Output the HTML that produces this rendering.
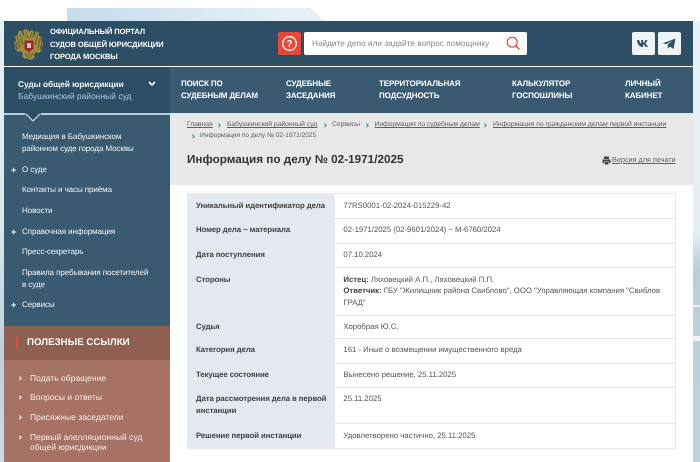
<!DOCTYPE html>
<html lang="ru">
<head>
<meta charset="utf-8">
<title>Информация по делу</title>
<style>
html,body{margin:0;padding:0;width:700px;height:462px;overflow:hidden;background:#fff}
body{position:relative;font-family:"Liberation Sans","DejaVu Sans",sans-serif;font-size:8px;color:#555;text-rendering:geometricPrecision}
.b{position:absolute}
.t{position:absolute;white-space:nowrap;line-height:12px}
a{color:inherit}
.m{color:#fff;font-weight:bold;font-size:8px;letter-spacing:-.12px}
.s{color:#f4f7f9;font-size:8px;letter-spacing:-.08px}
.u{color:#f8ece8;font-size:8.500px;letter-spacing:.03px}
.l{color:#404040;font-weight:bold;font-size:7.800px;letter-spacing:-.09px;left:196px}
.v{color:#555;font-size:7.800px;letter-spacing:-.03px;left:343.400px}
.c{color:#606060;font-size:6.800px;letter-spacing:-.03px}
.a{position:absolute;width:2.400px;height:2.400px;border-top:1.100px solid #2b8a99;border-right:1.100px solid #2b8a99;transform:rotate(45deg)}
.w{position:absolute;left:17.500px;width:2.400px;height:2.400px;border-top:1.100px solid #fff;border-right:1.100px solid #fff;transform:rotate(45deg)}
.p{color:#fff;font-weight:bold;font-size:9px;left:11px}
.r{left:187px;width:488px;height:1px;background:#e4e9ef}
</style>
</head>
<body>
<div class="b" style="left:67px;top:8px;width:258px;height:13px;background:linear-gradient(90deg,#c5dcec,#e0edf6 70%,#e9f1f7);clip-path:polygon(0 0,243px 0,258px 100%,0 100%)"></div>
<div class="b" style="left:0;top:21px;width:4px;height:441px;background:linear-gradient(180deg,#e6eff5 0%,#dbe7ee 45%,#bdd0da 75%,#cbdbe3 100%)"></div>
<div class="b" style="left:693px;top:21px;width:7px;height:441px;background:linear-gradient(180deg,#e9f1f6 0%,#e5eef3 48%,#b9d0da 56%,#bcd2dc 100%)"></div>
<div class="b" style="left:693px;top:305px;width:7px;height:2px;background:#e6eff3"></div>
<div class="b" style="left:693px;top:336px;width:7px;height:5px;background:#eef4f6"></div>

<div class="b" style="left:4px;top:21px;width:689px;height:45px;background:#2c4f65"></div>
<div class="b" style="left:4px;top:67px;width:166px;height:46px;background:#2c4f65"></div>
<div class="b" style="left:170px;top:67px;width:523px;height:46px;background:#3a5a72"></div>

<svg class="b" style="left:13px;top:27px" width="32" height="34" viewBox="0 0 32 34">
<path d="M16 1l-1 3-3-2-2 2 1 4 2 3-3-3-2-5-3 2 0 3-3 1 1 4-2 2 1 4 0 3 3 3 3-1 2 3-1 2 3 3 2-1 2 2 1-1 2 1 3-3-1-2 2-3 3 1 3-3 0-3 1-4-2-2 1-4-3-1 0-3-3-2-2 5-3 3 2-3 1-4-2-2-3 2z" fill="#a08d3a"/>
<path d="M4 8l3 13M7 7l3 11M2 12l3 10M1.500 17l3 6M28 8l-3 13M25 7l-3 11M30 12l-3 10M30.500 17l-3 6M13 5l2 6M19 5l-2 6M12 26l2 4M20 26l-2 4M16 25v6" stroke="#54583f" stroke-width=".9" fill="none"/>
<path d="M11.500 13.500h9v8.500l-4.500 3-4.500-3z" fill="#99272f"/>
<path d="M14 16h4v5h-4z" fill="#c9c2c2"/>
</svg>

<div class="t" style="left:50px;top:26px;color:#fff;font-weight:bold;font-size:7.600px;letter-spacing:-.12px;line-height:12.500px;width:130px">ОФИЦИАЛЬНЫЙ ПОРТАЛ<br>СУДОВ ОБЩЕЙ ЮРИСДИКЦИИ<br>ГОРОДА МОСКВЫ</div>

<div class="b" style="left:278px;top:32px;width:23px;height:23px;background:#e9473a;border-radius:2px"></div>
<svg class="b" style="left:278px;top:32px" width="23" height="23" viewBox="0 0 23 23"><circle cx="11.500" cy="11.500" r="6.800" fill="none" stroke="#fff" stroke-width="1.300"/><text x="11.500" y="15" text-anchor="middle" fill="#fff" font-size="10" font-weight="bold" font-family="Liberation Sans">?</text></svg>
<div class="b" style="left:304px;top:32px;width:223px;height:23px;background:#fff;border-radius:2px"></div>
<div class="t" style="left:312px;top:37.500px;color:#858585;font-size:8.200px;letter-spacing:.03px">Найдите дело или задайте вопрос помощнику</div>
<svg class="b" style="left:505px;top:35px" width="17" height="17" viewBox="0 0 17 17"><circle cx="7.200" cy="7.200" r="5" fill="none" stroke="#e9473a" stroke-width="1.200"/><path d="M11 11l3.500 3.500" stroke="#e9473a" stroke-width="1.300"/></svg>

<div class="b" style="left:632px;top:32px;width:23px;height:23px;background:#eef3f6;border-radius:2px"></div>
<div class="b" style="left:658px;top:32px;width:23px;height:23px;background:#eef3f6;border-radius:2px"></div>
<svg class="b" style="left:632px;top:32px" width="23" height="23" viewBox="0 0 23 23"><path d="M5 8h2.200c.3 2 1.200 3.400 2 3.600V8h2v2.800c.9-.2 1.800-1.300 2.200-2.800h2c-.4 1.800-1.400 3-2.200 3.500.9.5 2 1.500 2.600 3.500h-2.200c-.5-1.400-1.400-2.300-2.400-2.500V15h-.6C7.500 15 5.400 12.300 5 8z" fill="#2c4f65"/></svg>
<svg class="b" style="left:658px;top:32px" width="23" height="23" viewBox="0 0 23 23"><path d="M5 11.300L17.500 6.500l-2 10.500-3.500-2.500-2 2-.5-3.500 5-4.500-6.200 3.800z" fill="#2c4f65"/></svg>

<div class="t" style="left:18px;top:78px;color:#f4f7f9;font-size:8.400px;letter-spacing:-.06px;font-weight:bold">Суды общей юрисдикции</div>
<div class="t" style="left:18px;top:90px;color:#a2c8e6;font-size:8.500px;letter-spacing:-.01px">Бабушкинский районный суд</div>
<svg class="b" style="left:148px;top:81px" width="8" height="6" viewBox="0 0 8 6"><path d="M1 1l3 3 3-3" stroke="#fff" stroke-width="1.600" fill="none"/></svg>

<div class="t m" style="left:181px;top:78px">ПОИСК ПО</div>
<div class="t m" style="left:181px;top:90px">СУДЕБНЫМ ДЕЛАМ</div>
<div class="t m" style="left:286px;top:78px">СУДЕБНЫЕ</div>
<div class="t m" style="left:286px;top:90px">ЗАСЕДАНИЯ</div>
<div class="t m" style="left:379px;top:78px">ТЕРРИТОРИАЛЬНАЯ</div>
<div class="t m" style="left:379px;top:90px">ПОДСУДНОСТЬ</div>
<div class="t m" style="left:512px;top:78px">КАЛЬКУЛЯТОР</div>
<div class="t m" style="left:512px;top:90px">ГОСПОШЛИНЫ</div>
<div class="t m" style="left:625px;top:78px">ЛИЧНЫЙ</div>
<div class="t m" style="left:625px;top:90px">КАБИНЕТ</div>

<div class="b" style="left:4px;top:113px;width:166px;height:213px;background:#3a5a72"></div>
<div class="b" style="left:4px;top:113px;width:166px;height:2px;background:#b4d0e2"></div>
<svg class="b" style="left:25px;top:113px" width="16" height="10" viewBox="0 0 16 10"><path d="M0 0h16v1L8 9 0 1z" fill="#2c4f65"/><path d="M1 1l7 7 7-7" stroke="#b4d0e2" stroke-width="1.300" fill="none"/></svg>

<div class="t s" style="left:22px;top:131px">Медиация в Бабушкинском</div>
<div class="t s" style="left:22px;top:143px">районном суде города Москвы</div>
<div class="t s" style="left:22px;top:164px">О суде</div>
<div class="t s" style="left:22px;top:184px">Контакты и часы приёма</div>
<div class="t s" style="left:22px;top:205px">Новости</div>
<div class="t s" style="left:22px;top:226px">Справочная информация</div>
<div class="t s" style="left:22px;top:246px">Пресс-секретарь</div>
<div class="t s" style="left:22px;top:267px">Правила пребывания посетителей</div>
<div class="t s" style="left:22px;top:279px">в суде</div>
<div class="t s" style="left:22px;top:299px">Сервисы</div>
<div class="t p" style="top:164px">+</div>
<div class="t p" style="top:226px">+</div>
<div class="t p" style="top:299px">+</div>

<div class="b" style="left:4px;top:326px;width:166px;height:34px;background:#8f5f52"></div>
<div class="b" style="left:4px;top:360px;width:166px;height:102px;background:#a67266"></div>
<div class="b" style="left:16px;top:337px;width:2px;height:10px;background:#e9473a"></div>
<div class="t" style="left:27px;top:337px;color:#fff;font-weight:bold;font-size:9.700px;letter-spacing:.02px">ПОЛЕЗНЫЕ ССЫЛКИ</div>
<div class="t u" style="left:30px;top:372px">Подать обращение</div>
<div class="t u" style="left:30px;top:391px">Вопросы и ответы</div>
<div class="t u" style="left:30px;top:411px">Присяжные заседатели</div>
<div class="t u" style="left:30px;top:431px">Первый апелляционный суд</div>
<div class="t u" style="left:30px;top:441px">общей юрисдикции</div>
<div class="w" style="top:376.500px"></div>
<div class="w" style="top:395.500px"></div>
<div class="w" style="top:415.500px"></div>
<div class="w" style="top:435.500px"></div>

<div class="b" style="left:170px;top:113px;width:523px;height:72px;background:#e8e8e8"></div>
<div class="t c" style="left:187px;top:119px"><u>Главная</u></div>
<div class="t c" style="left:227px;top:119px"><u>Бабушкинский районный суд</u></div>
<div class="t c" style="left:332px;top:119px">Сервисы</div>
<div class="t c" style="left:374.500px;top:119px"><u>Информация по судебным делам</u></div>
<div class="t c" style="left:493px;top:119px"><u>Информация по гражданским делам первой инстанции</u></div>
<div class="t c" style="left:200px;top:130px;font-size:6.600px">Информация по делу № 02-1971/2025</div>
<div class="a" style="left:216.500px;top:123.500px"></div>
<div class="a" style="left:322.500px;top:123.500px"></div>
<div class="a" style="left:364.500px;top:123.500px"></div>
<div class="a" style="left:482.500px;top:123.500px"></div>
<div class="a" style="left:190.500px;top:134.500px"></div>

<div class="t" style="left:187px;top:153px;height:14px;line-height:14px;color:#333;font-weight:bold;font-size:11.700px;letter-spacing:.02px">Информация по делу № 02-1971/2025</div>
<svg class="b" style="left:601.500px;top:155.500px" width="9" height="9" viewBox="0 0 9 9"><path d="M2 0.500h5v2.500H2zM.5 3.500h8v3.500H7V5.500H2V7H.5zM2.500 6h4v2.500h-4z" fill="#444"/></svg>
<div class="t c" style="left:612px;top:154px;font-size:7.300px"><u>Версия для печати</u></div>

<div class="b" style="left:187px;top:193px;width:148px;height:255px;background:#e4e9f0"></div>
<div class="b" style="left:187px;top:193px;width:487px;height:254px;border:1px solid #e4e9ef"></div>
<div class="b r" style="top:217.500px"></div>
<div class="b r" style="top:243px"></div>
<div class="b r" style="top:267px"></div>
<div class="b r" style="top:314.500px"></div>
<div class="b r" style="top:338px"></div>
<div class="b r" style="top:363px"></div>
<div class="b r" style="top:387px"></div>
<div class="b r" style="top:423px"></div>

<div class="t l" style="top:200px">Уникальный идентификатор дела</div>
<div class="t v" style="top:200px">77RS0001-02-2024-015229-42</div>
<div class="t l" style="top:224px">Номер дела ~ материала</div>
<div class="t v" style="top:224px">02-1971/2025 (02-9601/2024) ~ М-6760/2024</div>
<div class="t l" style="top:249px">Дата поступления</div>
<div class="t v" style="top:249px">07.10.2024</div>
<div class="t l" style="top:273.500px">Стороны</div>
<div class="t v" style="top:273.500px"><b style="color:#404040">Истец:</b> Ляховецкий А.П., Ляховецкий П.П.</div>
<div class="t v" style="top:285px"><b style="color:#404040">Ответчик:</b> ГБУ "Жилищник района Свиблово", ООО "Управляющая компания "Свиблов</div>
<div class="t v" style="top:297px">ГРАД"</div>
<div class="t l" style="top:321px">Судья</div>
<div class="t v" style="top:321px">Хоробрая Ю.С.</div>
<div class="t l" style="top:344px">Категория дела</div>
<div class="t v" style="top:344px">161 - Иные о возмещении имущественного вреда</div>
<div class="t l" style="top:369px">Текущее состояние</div>
<div class="t v" style="top:369px">Вынесено решение, 25.11.2025</div>
<div class="t l" style="top:393px">Дата рассмотрения дела в первой</div>
<div class="t l" style="top:405px">инстанции</div>
<div class="t v" style="top:393px">25.11.2025</div>
<div class="t l" style="top:429.500px">Решение первой инстанции</div>
<div class="t v" style="top:429.500px">Удовлетворено частично, 25.11.2025</div>
</body>
</html>
